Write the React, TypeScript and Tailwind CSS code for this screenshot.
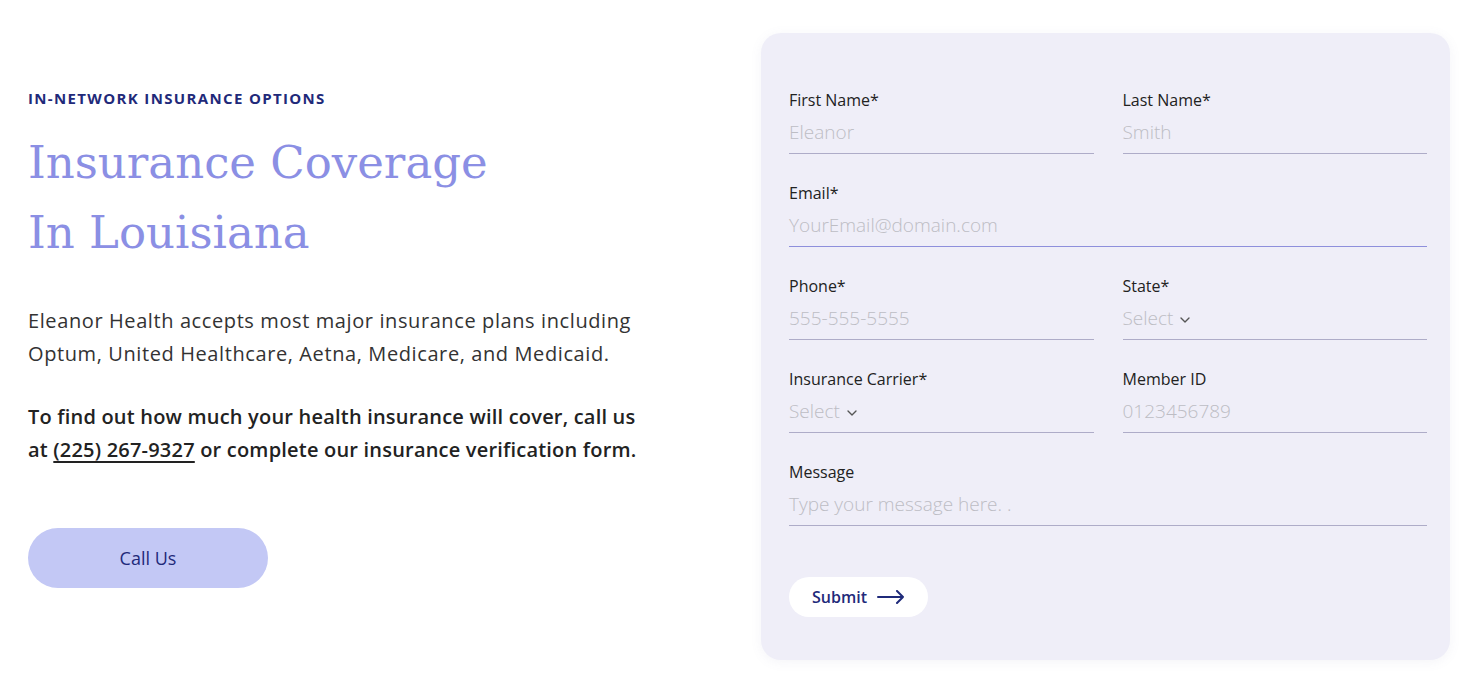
import { ChevronDown } from 'lucide-react';

const sans = { fontFamily: '"Open Sans", "Noto Sans", sans-serif' };

function Field({ label, placeholder, select, focus }: { label: string; placeholder: string; select?: boolean; focus?: boolean }) {
  return (
    <div className="flex flex-col">
      <span className="text-[16px] font-medium leading-[20px] text-[#222222]">{label}</span>
      <div
        className={`mt-[10px] flex h-[34px] items-start border-b ${focus ? 'border-[#8e8fdc]' : 'border-[#aeacc8]'}`}
      >
        <span className="flex items-center gap-[4px] text-[19px] font-light leading-[24px] text-[#bdbdc4]">
          {placeholder}
          {select && <ChevronDown className="mt-[3px] h-[16px] w-[16px] text-[#555]" strokeWidth={2} />}
        </span>
      </div>
    </div>
  );
}

export default function App() {
  return (
    <div className="flex min-h-[696px] w-full bg-white pl-[28px] pt-[33px]" style={sans}>
      {/* Left column */}
      <div className="flex w-[733px] flex-col pt-[57px]">
        <p className="text-[15px] font-bold uppercase leading-[16px] tracking-[0.09em] text-[#1f2a7a]">
          In-Network Insurance Options
        </p>
        <h1
          className="mt-[22px] text-[45px] leading-[70px] text-[#8b8fe4]"
          style={{ fontFamily: '"DejaVu Serif", "Liberation Serif", serif' }}
        >
          Insurance Coverage
          <br />
          In Louisiana
        </h1>
        <p className="mt-[36px] text-[20px] leading-[33px] tracking-[0.03em] text-[#333333]">
          Eleanor Health accepts most major insurance plans including
          <br />
          Optum, United Healthcare, Aetna, Medicare, and Medicaid.
        </p>
        <p className="mt-[30px] text-[20px] font-semibold leading-[33px] tracking-[0.01em] text-[#222222]">
          To find out how much your health insurance will cover, call us
          <br />
          at <span className="underline underline-offset-4">(225) 267-9327</span> or complete our insurance verification form.
        </p>
        <button className="mt-[62px] flex h-[60px] w-[240px] items-center justify-center rounded-full bg-[#c3c8f5] text-[18px] font-medium text-[#1f2a7a]">
          Call Us
        </button>
      </div>

      {/* Form card */}
      <div className="flex h-[627px] w-[689px] flex-col rounded-[20px] bg-[#efeef8] pl-[28px] pr-[23px] pt-[57px] shadow-[0_2px_12px_rgba(120,120,160,0.08)]">
        <div className="grid grid-cols-2 gap-x-[29px] gap-y-[29px]">
          <Field label="First Name*" placeholder="Eleanor" />
          <Field label="Last Name*" placeholder="Smith" />
          <div className="col-span-2">
            <Field label="Email*" placeholder="YourEmail@domain.com" focus />
          </div>
          <Field label="Phone*" placeholder="555-555-5555" />
          <Field label="State*" placeholder="Select" select />
          <Field label="Insurance Carrier*" placeholder="Select" select />
          <Field label="Member ID" placeholder="0123456789" />
          <div className="col-span-2">
            <Field label="Message" placeholder="Type your message here. ." />
          </div>
        </div>
        <button className="mt-[51px] flex h-[40px] w-[139px] items-center justify-center gap-[10px] rounded-full bg-white text-[16px] font-semibold text-[#1f2a7a]">
          Submit
          <svg width="28" height="14" viewBox="0 0 28 14" fill="none" stroke="#1f2a7a" strokeWidth="2" strokeLinecap="round" strokeLinejoin="round">
            <path d="M1 7h25M20 1l6 6-6 6" />
          </svg>
        </button>
      </div>
    </div>
  );
}
